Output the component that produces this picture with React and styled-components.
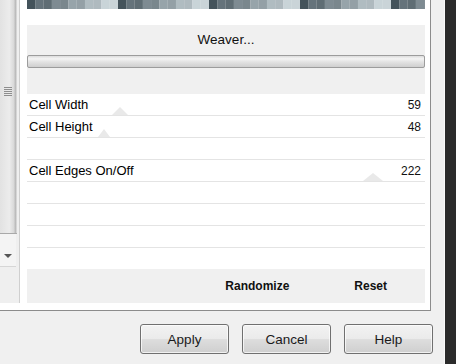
import React from 'react';
import styled, { createGlobalStyle } from 'styled-components';

const GlobalStyle = createGlobalStyle`
  html, body {
    margin: 0;
    padding: 0;
    background: #f0f0f0;
  }
  body {
    font-family: 'Liberation Sans', Arial, sans-serif;
    color: #000;
  }
`;

const Screen = styled.div`
  display: flex;
  width: 456px;
  height: 364px;
  overflow: hidden;
`;

const Main = styled.div`
  width: 444px;
  display: flex;
  flex-direction: column;
  background: #f0f0f0;
  border-right: 1px solid #fafafa;
`;

const DarkEdge = styled.div`
  flex: 1;
  background: #2b2b2b;
`;

const Frame = styled.div`
  display: flex;
  width: 430px;
  height: 310px;
  padding-bottom: 0;
  background: #fff;
  border-right: 1px solid #8c8c8c;
  border-bottom: 1px solid #8c8c8c;
`;

const LeftCol = styled.div`
  width: 19px;
  height: 303px;
  display: flex;
  flex-direction: column;
  border-right: 1px solid #cfcfcf;
  background: #efefef;
`;

const Thumb = styled.div`
  height: 233px;
  width: 17px;
  display: flex;
  align-items: center;
  justify-content: center;
  background: linear-gradient(to right, #e2e2e2 0%, #ececec 55%, #dadada 80%, #b4b4b4 94%, #f6f6f6 100%);
  border-bottom: 1px solid #a9a9a9;
`;

const Grip = styled.div`
  width: 8px;
  height: 9px;
  margin-left: -2px;
  margin-top: -50px;
  background: repeating-linear-gradient(to bottom, #8e8e8e 0 1px, transparent 1px 2px);
`;

const ArrowBox = styled.div`
  height: 33px;
  width: 17px;
  display: flex;
  align-items: flex-end;
  justify-content: center;
  padding-bottom: 8px;
  box-sizing: border-box;
  background: #f4f4f4;
  border-bottom: 1px solid #d6d6d6;
  margin-left: -1px;
`;

const Arrow = styled.div`
  width: 0;
  height: 0;
  border-left: 4px solid transparent;
  border-right: 4px solid transparent;
  border-top: 4px solid #555;
`;

const Content = styled.div`
  flex: 1;
  display: flex;
  flex-direction: column;
  padding: 0 5px 0 7px;
`;

const Strip = styled.svg`
  display: block;
  width: 398px;
  height: 9px;
  margin-bottom: 16px;
`;

const TitleBox = styled.div`
  height: 69px;
  background: #f0f0f0;
  display: flex;
  flex-direction: column;
  align-items: stretch;
  padding-top: 7px;
  box-sizing: border-box;
`;

const Title = styled.div`
  font-size: 13.5px;
  line-height: 16px;
  text-align: center;
  color: #111;
`;

const Bar = styled.div`
  margin-top: 7px;
  height: 11px;
  border: 1px solid #9c9c9c;
  border-radius: 2px;
  background: linear-gradient(to bottom, #dcdcdc 0%, #f4f4f4 25%, #e2e2e2 55%, #cfcfcf 100%);
`;

const Row = styled.div`
  height: 22px;
  box-sizing: border-box;
  border-bottom: 1px solid #e4e4e4;
  display: flex;
  align-items: center;
  justify-content: space-between;
  padding: 0 4px 0 2px;
  position: relative;
  font-size: 13px;
`;

const Value = styled.span`
  font-size: 12px;
  color: #111;
`;

const Tick = styled.div`
  position: absolute;
  bottom: 0;
  width: 0;
  height: 0;
  border-left: ${(p) => p.$w / 2}px solid transparent;
  border-right: ${(p) => p.$w / 2}px solid transparent;
  border-bottom: 8px solid #e9e9e9;
`;

const Spacer = styled.div`
  height: 21px;
`;

const ActionBar = styled.div`
  height: 34px;
  background: #f0f0f0;
  display: flex;
  align-items: center;
  justify-content: flex-end;
  gap: 65px;
  padding-right: 38px;
  font-size: 12px;
  font-weight: bold;
  color: #111;
`;

const Footer = styled.div`
  display: flex;
  justify-content: flex-end;
  gap: 13px;
  padding: 13px 11px 0 0;
`;

const Button = styled.button`
  width: 89px;
  height: 30px;
  box-sizing: border-box;
  border: 1px solid #707070;
  border-radius: 3px;
  background: linear-gradient(to bottom, #f2f2f2 0%, #ebebeb 48%, #dddddd 52%, #cfcfcf 100%);
  box-shadow: inset 0 0 0 1px rgba(255, 255, 255, 0.7);
  font-family: 'Liberation Sans', Arial, sans-serif;
  font-size: 13.5px;
  color: #1a1a1a;
  padding: 0;
`;

const dark = [78, 93, 101];
const light = [208, 218, 222];

const tiles = [];
for (let t = 0; t < 5; t++) {
  for (let i = 0; i < 11; i++) {
    const k = i / 10;
    const off = i % 2 === 0 ? -10 : 10;
    const c = dark.map((d, j) => Math.round(d + (light[j] - d) * k + off * (1 - k * 0.4)));
    tiles.push({ x: t * 91 + i * 8.27, fill: `rgb(${c.join(',')})` });
  }
}

const rows = [
  { label: 'Cell Width', value: '59', tick: { left: 85, w: 16 } },
  { label: 'Cell Height', value: '48', tick: { left: 71, w: 12 } },
  { label: '', value: '' },
  { label: 'Cell Edges On/Off', value: '222', tick: { left: 336, w: 20 } },
  { label: '', value: '' },
  { label: '', value: '' },
  { label: '', value: '' },
];

export default function App() {
  return (
    <>
      <GlobalStyle />
      <Screen>
        <Main>
          <Frame>
            <LeftCol>
              <Thumb>
                <Grip />
              </Thumb>
              <ArrowBox>
                <Arrow />
              </ArrowBox>
            </LeftCol>
            <Content>
              <Strip viewBox="0 0 398 9">
                {tiles.map((s, i) => (
                  <rect key={i} x={s.x} y="0" width="8.4" height="9" fill={s.fill} />
                ))}
              </Strip>
              <TitleBox>
                <Title>Weaver...</Title>
                <Bar />
              </TitleBox>
              {rows.map((r, i) => (
                <Row key={i}>
                  {r.tick && <Tick $w={r.tick.w} style={{ left: r.tick.left }} />}
                  <span style={{ position: 'relative' }}>{r.label}</span>
                  <Value style={{ position: 'relative' }}>{r.value}</Value>
                </Row>
              ))}
              <Spacer />
              <ActionBar>
                <span>Randomize</span>
                <span>Reset</span>
              </ActionBar>
            </Content>
          </Frame>
          <Footer>
            <Button>Apply</Button>
            <Button>Cancel</Button>
            <Button>Help</Button>
          </Footer>
        </Main>
        <DarkEdge />
      </Screen>
    </>
  );
}
